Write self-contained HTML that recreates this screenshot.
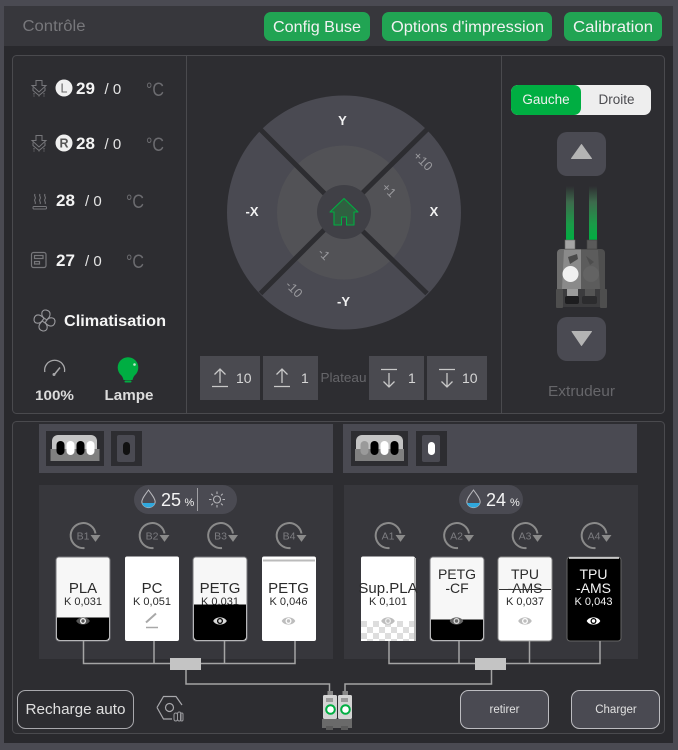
<!DOCTYPE html>
<html><head><meta charset="utf-8"><style>
html,body{margin:0;padding:0;background:#4a4a52}
svg{display:block}
text{font-family:"Liberation Sans",sans-serif}
.c{text-anchor:middle}
</style></head><body>
<svg width="678" height="750" viewBox="0 0 678 750" xmlns="http://www.w3.org/2000/svg">
<defs>
<linearGradient id="tube" x1="0" y1="0" x2="0" y2="1"><stop offset="0" stop-color="#2d2d31"/><stop offset=".3" stop-color="#3d6a4c"/><stop offset=".7" stop-color="#1b9a48"/><stop offset="1" stop-color="#00ae42"/></linearGradient>
<pattern id="chk" width="12" height="12" patternUnits="userSpaceOnUse" x="361" y="621"><rect width="12" height="12" fill="#fff"/><rect width="6" height="6" fill="#ddd"/><rect x="6" y="6" width="6" height="6" fill="#ddd"/></pattern>
<g id="eye"><path d="M-6.800 0C-4.200 -4.800 4.200 -4.800 6.800 0C4.200 4.800 -4.200 4.800 -6.800 0Z" fill="currentColor"/><circle r="3" fill="var(--e,#000)"/><circle r="1.700" fill="currentColor"/></g>
<path id="slot" d="M1 12.500A12.500 12.500 0 1 1 12 -2" fill="none" stroke="#8a8a8a" stroke-width="2"/>
<path id="slotarrow" d="M8 0h8l-4 5.500z" fill="#8a8a8a" stroke="#8a8a8a"/>
</defs>

<rect width="678" height="750" fill="#4a4a52"/>
<rect x="4" y="6" width="669" height="737" fill="#29292d"/>
<rect x="4" y="6" width="669" height="40" fill="#37373c"/>
<text x="22.500" y="31" font-size="15.500" fill="#77777b" textLength="63" lengthAdjust="spacingAndGlyphs">Contrôle</text>

<rect x="264" y="12" width="106" height="29" rx="7" fill="#21a453"/>
<rect x="382" y="12" width="170" height="29" rx="7" fill="#21a453"/>
<rect x="564" y="12" width="98" height="29" rx="7" fill="#21a453"/>
<g fill="#f2f2f2" font-size="16">
<text x="273" y="32" textLength="88" lengthAdjust="spacingAndGlyphs">Config Buse</text>
<text x="391" y="32" textLength="153" lengthAdjust="spacingAndGlyphs">Options d'impression</text>
<text x="573" y="32" textLength="80" lengthAdjust="spacingAndGlyphs">Calibration</text>
</g>

<!-- top panel -->
<rect x="12.500" y="55.500" width="652" height="358" rx="4" fill="#2d2d31" stroke="#4a4a4e"/>
<path d="M186.500 56V413M501.500 56V413" stroke="#4a4a4e"/>

<!-- nozzle icons -->
<g id="nz" fill="none" stroke="#77777b" stroke-width="1">
<path d="M36 80.500h6v5h4l-7 6.500-7-6.500h4z"/><path d="M33 87.500v3l6 5 6-5v-3"/>
<path d="M34 93v1.500M34 95.500v1M39 96.500v.5M44 93v1.500M44 95.500v1"/>
</g>
<use href="#nz" y="55"/>
<circle cx="64" cy="88" r="8.500" fill="#f0f0f0"/><text class="c" x="64" y="92.500" font-size="12.500" fill="#666">L</text>
<circle cx="64" cy="143" r="8.500" fill="#f0f0f0"/><text class="c" x="64" y="147.500" font-size="12.500" font-weight="bold" fill="#555">R</text>
<g fill="#f4f4f4" font-size="17" font-weight="bold">
<text x="76" y="94">29</text><text x="76" y="149">28</text><text x="56" y="206">28</text><text x="56" y="266">27</text>
</g>
<g fill="#e4e4e4" font-size="15">
<text x="104.500" y="94">/ 0</text><text x="104.500" y="149">/ 0</text><text x="85" y="206">/ 0</text><text x="85" y="266">/ 0</text>
</g>
<g fill="#6c6c70" font-size="19">
<text x="146" y="96" textLength="18" lengthAdjust="spacingAndGlyphs">°C</text><text x="146" y="151" textLength="18" lengthAdjust="spacingAndGlyphs">°C</text><text x="126" y="208" textLength="18" lengthAdjust="spacingAndGlyphs">°C</text><text x="126" y="268" textLength="18" lengthAdjust="spacingAndGlyphs">°C</text>
</g>
<!-- bed icon -->
<g fill="none" stroke="#77777b" stroke-width="1">
<path d="M35 194c-1.500 2 1.500 3 0 5s1.500 3 0 5M40 194c-1.500 2 1.500 3 0 5s1.500 3 0 5M45 194c-1.500 2 1.500 3 0 5s1.500 3 0 5"/>
<rect x="33" y="206.500" width="13.500" height="2.500" rx="1"/>
</g>
<!-- chamber icon -->
<g fill="none" stroke="#77777b" stroke-width="1.200">
<rect x="31.500" y="252.500" width="14.500" height="15" rx="2"/>
<rect x="34.500" y="255.500" width="8.500" height="3"/><rect x="34.500" y="261.500" width="5" height="2.500"/>
</g>
<!-- fan -->
<g fill="none" stroke="#9a9a9e" stroke-width="1.100" transform="translate(44.500 320.500) rotate(15)">
<circle r="1.800"/>
<path id="petal" d="M-.5 -2C-5 -3.500 -6.500 -10 -1 -10.500C4 -10.800 5.500 -6 1.800 -1"/>
<path d="M-.5 -2C-5 -3.500 -6.500 -10 -1 -10.500C4 -10.800 5.500 -6 1.800 -1" transform="rotate(90)"/>
<path d="M-.5 -2C-5 -3.500 -6.500 -10 -1 -10.500C4 -10.800 5.500 -6 1.800 -1" transform="rotate(180)"/>
<path d="M-.5 -2C-5 -3.500 -6.500 -10 -1 -10.500C4 -10.800 5.500 -6 1.800 -1" transform="rotate(270)"/>
</g>
<text x="64" y="326" font-size="15.500" font-weight="bold" fill="#f4f4f4" textLength="102" lengthAdjust="spacingAndGlyphs">Climatisation</text>
<!-- gauge -->
<path d="M44.800 372A10 10 0 1 1 64.500 372" fill="none" stroke="#a8a8aa" stroke-width="1.300"/>
<path d="M54 375L60 367.500" stroke="#a8a8aa" stroke-width="1.500"/><circle cx="54" cy="374.500" r="1.500" fill="#a8a8aa"/>
<text class="c" x="54.500" y="400" font-size="14" font-weight="bold" fill="#dcdcdc" textLength="39" lengthAdjust="spacingAndGlyphs">100%</text>
<!-- lamp -->
<circle cx="128" cy="367.500" r="10.300" fill="#00ae42"/>
<path d="M120 373.500C122 376 123 377.500 123.500 380H132.500C133 377.500 134 376 136 373.500z" fill="#00ae42"/>
<rect x="124.500" y="380.500" width="7" height="2" rx="1" fill="#00ae42"/>
<circle cx="134.500" cy="364.500" r="1.300" fill="#bfe9cd"/>
<text class="c" x="129" y="400" font-size="14.500" font-weight="bold" fill="#dcdcdc" textLength="49" lengthAdjust="spacingAndGlyphs">Lampe</text>

<!-- jog wheel -->
<circle cx="344" cy="212.500" r="117" fill="#4a4a52"/>
<circle cx="344" cy="212.500" r="67" fill="#525256"/>
<path d="M260.500 129.500L325 194M427 129.500L362.500 193M260.500 293.500L325 229M427 293.500L362.500 231" stroke="#2d2d31" stroke-width="5"/>
<circle cx="344" cy="212" r="27" fill="#404046"/>
<path d="M344 198.500L330 212h4v13h7.500v-8h5v8h7.500v-13h4z" fill="#2f6040" stroke="#00ae42" stroke-width="1.100" stroke-linejoin="round"/>
<g font-weight="bold" fill="#f2f2f2" font-size="13">
<text class="c" x="342.500" y="125">Y</text>
<text class="c" x="434" y="216">X</text>
<text class="c" x="252" y="216">-X</text>
<text class="c" x="343.500" y="306">-Y</text>
</g>
<g fill="#9a9a9e" font-size="12.500">
<text class="c" transform="translate(420 164) rotate(45)">+10</text>
<text class="c" transform="translate(386 193) rotate(45)">+1</text>
<text class="c" transform="translate(321 257) rotate(45)">-1</text>
<text class="c" transform="translate(291 292) rotate(45)">-10</text>
</g>

<!-- plateau -->
<g fill="#4a4a50">
<rect x="200" y="356" width="60" height="44"/><rect x="263" y="356" width="55" height="44"/>
<rect x="369" y="356" width="55" height="44"/><rect x="427" y="356" width="60" height="44"/>
</g>
<g fill="none" stroke="#c8c8c8" stroke-width="1.300">
<path d="M212 386.500H228M220 383V369M214.500 374.500L220 369L225.500 374.500"/>
<path d="M274 386.500H290M282 383V369M276.500 374.500L282 369L287.500 374.500"/>
<path d="M381 369.500H397M389 373V387M383.500 381.500L389 387L394.500 381.500"/>
<path d="M439 369.500H455M447 373V387M441.500 381.500L447 387L452.500 381.500"/>
</g>
<g fill="#d6d6d6" font-size="14">
<text x="236" y="383">10</text><text x="301" y="383">1</text><text x="408" y="383">1</text><text x="462" y="383">10</text>
</g>
<text x="320.500" y="382" font-size="12.500" fill="#66666a" textLength="46" lengthAdjust="spacingAndGlyphs">Plateau</text>

<!-- extruder -->
<rect x="511" y="85" width="140" height="30" rx="7" fill="#eeeeee"/>
<path d="M518 85h56a7 7 0 0 1 7 7v16a7 7 0 0 1-7 7h-56a7 7 0 0 1-7-7v-16a7 7 0 0 1 7-7z" fill="#00ae42"/>
<text class="c" x="546" y="104" font-size="13.500" fill="#f0f0f0">Gauche</text>
<text class="c" x="616.500" y="104" font-size="13.500" fill="#4c4c50">Droite</text>
<rect x="557" y="132" width="49" height="44" rx="10" fill="#4a4a52"/>
<path d="M581.500 144.500L591.500 158.500H571.500z" fill="#b4b4b4" stroke="#b4b4b4" stroke-linejoin="round"/>
<rect x="557" y="317" width="49" height="44" rx="10" fill="#4a4a52"/>
<path d="M572 331.500H591.500L581.500 345.500z" fill="#b4b4b4" stroke="#b4b4b4" stroke-linejoin="round"/>
<rect x="566" y="186" width="8" height="54" fill="url(#tube)"/>
<rect x="589" y="186" width="8" height="54" fill="url(#tube)"/>
<rect x="565" y="240" width="10" height="9" fill="#a4a4a4" stroke="#666" stroke-width=".6"/>
<rect x="587" y="240" width="10" height="9" fill="#5a5a5a" stroke="#444" stroke-width=".6"/>
<rect x="560" y="289" width="43" height="18" fill="#3c3c3e"/>
<rect x="556" y="289" width="7" height="19" rx="1" fill="#4e4e4e"/>
<rect x="600" y="289" width="7" height="19" rx="1" fill="#4e4e4e"/>
<rect x="567" y="289" width="11" height="7" fill="#9c9c9c"/>
<rect x="585" y="289" width="10" height="7" fill="#555"/>
<rect x="565" y="296" width="14" height="8" rx="2" fill="#1d1d1f"/>
<rect x="582" y="296" width="15" height="8" rx="2" fill="#2c2c2e"/>
<path d="M561 249H581V289H557V253a4 4 0 0 1 4-4z" fill="#6e6e6e"/>
<path d="M564 250H581V289H562z" fill="#8a8a8a"/>
<path d="M581 249H601a4 4 0 0 1 4 4V289H581z" fill="#4f4f4f"/>
<path d="M581 250H598L600 289H581z" fill="#5c5c5c"/>
<path d="M568 257L577 254L578 259L570 264z" fill="#4a4a4a"/>
<path d="M586 256L594 262L590 265z" fill="#4d4d4d"/>
<circle cx="570.500" cy="274" r="8" fill="#f0f0f0"/>
<circle cx="591" cy="274" r="8" fill="#636363"/>
<text class="c" x="581.500" y="396" font-size="14.500" fill="#66666a" textLength="67" lengthAdjust="spacingAndGlyphs">Extrudeur</text>

<!-- bottom panel -->
<rect x="12.500" y="421.500" width="652" height="312" rx="4" fill="#2d2d31" stroke="#4a4a4e"/>
<rect x="39" y="424" width="294" height="49" fill="#4a4a52"/>
<rect x="343" y="424" width="294" height="49" fill="#4a4a52"/>
<rect x="39" y="485" width="294" height="174" fill="#37373c"/>
<rect x="344" y="485" width="294" height="174" fill="#37373c"/>

<!-- ext. spool top icons -->
<rect x="46" y="431" width="58" height="35" fill="#2d2d31"/>
<rect x="111" y="431" width="31" height="35" fill="#2d2d31"/>
<path d="M52 449V441a6 6 0 0 1 6-6H91a6 6 0 0 1 6 6v8z" fill="#c4c4c4"/>
<rect x="50.500" y="449" width="49" height="12" fill="#808080"/>
<rect x="56.500" y="441" width="8" height="14" rx="4" fill="#000"/><rect x="66.500" y="441" width="8" height="14" rx="4" fill="#fff"/>
<rect x="76.500" y="441" width="8" height="14" rx="4" fill="#000"/><rect x="86.500" y="441" width="8" height="14" rx="4" fill="#fff"/>
<rect x="117" y="435" width="18" height="27" rx="2" fill="#4a4a52"/><rect x="123" y="442" width="7" height="13" rx="3.500" fill="#111"/>

<rect x="351" y="431" width="57" height="35" fill="#2d2d31"/>
<rect x="416" y="431" width="31" height="35" fill="#2d2d31"/>
<path d="M356 449V441a6 6 0 0 1 6-6H397a6 6 0 0 1 6 6v8z" fill="#c4c4c4"/>
<rect x="355" y="449" width="49" height="12" fill="#808080"/>
<rect x="360.500" y="441" width="8" height="14" rx="4" fill="#9a9a9a"/><rect x="370.500" y="441" width="8" height="14" rx="4" fill="#000"/>
<rect x="380.500" y="441" width="8" height="14" rx="4" fill="#fff"/><rect x="390.500" y="441" width="8" height="14" rx="4" fill="#000"/>
<rect x="422" y="435" width="18" height="27" rx="2" fill="#4a4a52"/><rect x="428" y="442" width="7" height="13" rx="3.500" fill="#fff"/>

<!-- humidity -->
<rect x="134" y="485" width="103" height="29" rx="14.500" fill="#4a4a52"/>
<rect x="459" y="485" width="64" height="29" rx="14.500" fill="#4a4a52"/>
<g id="drop"><path d="M148.500 490C145 495 141.800 498.500 141.800 502a6.800 6.800 0 0 0 13.400 0C155.200 498.500 152 495 148.500 490z" fill="none" stroke="#b8b8bc" stroke-width="1"/>
<path d="M142.100 503h12.800a6.500 5.500 0 0 1-12.800 0z" fill="#2fa8dd"/></g>
<use href="#drop" x="325"/>
<text x="161" y="506" font-size="18" fill="#f4f4f4">25</text>
<text x="184.500" y="506" font-size="11" fill="#f0f0f0">%</text>
<text x="486" y="506" font-size="18" fill="#f4f4f4">24</text>
<text x="510" y="506" font-size="11" fill="#f0f0f0">%</text>
<path d="M197.500 488V511" stroke="#a0a0a4"/>
<g stroke="#b4b4b8" stroke-width="1.100" fill="none">
<circle cx="217" cy="499.500" r="3.500"/>
<path d="M217 491.500v2.500M217 505v2.500M209 499.500h2.500M222.500 499.500h2.500M211.300 493.800l1.700 1.700M221 503.500l1.700 1.700M222.700 493.800l-1.700 1.700M213 503.500l-1.700 1.700"/>
</g>

<!-- slot indicators -->
<g>
<use href="#slot" x="83.500" y="535.500"/><use href="#slotarrow" x="83.500" y="535.500"/>
<use href="#slot" x="152.500" y="535.500"/><use href="#slotarrow" x="152.500" y="535.500"/>
<use href="#slot" x="221" y="535.500"/><use href="#slotarrow" x="221" y="535.500"/>
<use href="#slot" x="289.500" y="535.500"/><use href="#slotarrow" x="289.500" y="535.500"/>
<use href="#slot" x="388.500" y="535.500"/><use href="#slotarrow" x="388.500" y="535.500"/>
<use href="#slot" x="457" y="535.500"/><use href="#slotarrow" x="457" y="535.500"/>
<use href="#slot" x="525.500" y="535.500"/><use href="#slotarrow" x="525.500" y="535.500"/>
<use href="#slot" x="594.500" y="535.500"/><use href="#slotarrow" x="594.500" y="535.500"/>
</g>
<g font-size="10.500" fill="#7c7c80">
<text class="c" x="83" y="539.500">B1</text><text class="c" x="152" y="539.500">B2</text><text class="c" x="220.500" y="539.500">B3</text><text class="c" x="289" y="539.500">B4</text>
<text class="c" x="388" y="539.500">A1</text><text class="c" x="456.500" y="539.500">A2</text><text class="c" x="525" y="539.500">A3</text><text class="c" x="594" y="539.500">A4</text>
</g>

<!-- cards -->
<rect x="56" y="557" width="54" height="84" rx="3" fill="#f7f7f7" stroke="#77777b"/>
<path d="M57 617.500H109V637a3 3 0 0 1-3 3H60a3 3 0 0 1-3-3z" fill="#000"/>
<text class="c" x="83" y="593" font-size="15" fill="#2b2b2b">PLA</text>
<text class="c" x="83" y="605" font-size="11" fill="#2b2b2b">K 0,031</text>
<use href="#eye" x="83" y="621" color="#555" style="--e:#f7f7f7"/>

<rect x="125" y="556.500" width="54" height="84.500" rx="2" fill="#fff"/>
<text class="c" x="152" y="593" font-size="15" fill="#2b2b2b">PC</text>
<text class="c" x="152" y="605" font-size="11" fill="#2b2b2b">K 0,051</text>
<path d="M146 622.500L156 613.500" stroke="#a8a8a8" stroke-width="2"/><path d="M146 627.500H158" stroke="#a8a8a8" stroke-width="1.500"/>

<rect x="193" y="557" width="54" height="84" rx="3" fill="#f7f7f7" stroke="#77777b"/>
<text class="c" x="220" y="593" font-size="15" fill="#2b2b2b">PETG</text>
<text class="c" x="220" y="605" font-size="11" fill="#2b2b2b">K 0,031</text>
<path d="M194 604.500H246V637a3 3 0 0 1-3 3H197a3 3 0 0 1-3-3z" fill="#000"/>
<use href="#eye" x="220" y="621" color="#d8d8d8" style="--e:#000"/>

<rect x="262" y="556.500" width="54" height="84.500" rx="2" fill="#fff"/>
<rect x="263" y="559.500" width="52" height="2" fill="#bbb"/>
<text class="c" x="288.500" y="593" font-size="15" fill="#2b2b2b">PETG</text>
<text class="c" x="288.500" y="605" font-size="11" fill="#2b2b2b">K 0,046</text>
<use href="#eye" x="288.500" y="621" color="#bdbdbd" style="--e:#fff"/>

<rect x="361" y="556.500" width="54" height="84.500" rx="2" fill="#fff"/>
<rect x="361" y="621" width="54" height="20" fill="url(#chk)"/>
<rect x="414" y="558" width="2" height="83" fill="#bbb"/>
<text class="c" x="388" y="593" font-size="15" fill="#2b2b2b">Sup.PLA</text>
<text class="c" x="388" y="605" font-size="11" fill="#2b2b2b">K 0,101</text>
<use href="#eye" x="388" y="621" color="#bdbdbd" style="--e:#eee"/>

<rect x="430" y="557" width="54" height="84" rx="3" fill="#f7f7f7" stroke="#77777b"/>
<path d="M431 619.500H483V637a3 3 0 0 1-3 3H434a3 3 0 0 1-3-3z" fill="#000"/>
<text class="c" x="457" y="579" font-size="14" fill="#2b2b2b">PETG</text>
<text class="c" x="457" y="593" font-size="14" fill="#2b2b2b">-CF</text>
<use href="#eye" x="456.500" y="621" color="#666" style="--e:#ddd"/>

<rect x="498" y="557" width="54" height="84" rx="3" fill="#fff" stroke="#888"/>
<rect x="499" y="558" width="52" height="31" fill="#f7f7f7"/>
<text class="c" x="525" y="579" font-size="14" fill="#2b2b2b">TPU</text>
<text class="c" x="525" y="593" font-size="14" fill="#2b2b2b">-AMS</text>
<path d="M499 589.500H551" stroke="#333"/>
<text class="c" x="525" y="605" font-size="11" fill="#2b2b2b">K 0,037</text>
<use href="#eye" x="525" y="621" color="#bdbdbd" style="--e:#fff"/>

<rect x="567" y="557" width="54" height="84" rx="3" fill="#000" stroke="#666"/>
<path d="M569 558H619" stroke="#e8e8e8" stroke-width="1.500"/>
<text class="c" x="593.500" y="579" font-size="14" fill="#f4f4f4">TPU</text>
<text class="c" x="593.500" y="593" font-size="14" fill="#f4f4f4">-AMS</text>
<text class="c" x="593.500" y="605" font-size="11" fill="#f4f4f4">K 0,043</text>
<use href="#eye" x="593.500" y="621" color="#fff" style="--e:#000"/>

<!-- pipes -->
<g fill="none" stroke="#a4a4a4" stroke-width="1.500">
<path d="M83.500 641V663.500H295V641M154 641V663M224.500 641V663"/>
<path d="M389 641V663.500H600V641M459 641V663M529.500 641V663"/>
<path d="M186 670V684H329.500V692"/>
<path d="M491.500 670V684H345V692"/>
</g>
<rect x="170" y="658" width="31" height="12" fill="#c4c4c4"/>
<rect x="475" y="658" width="31" height="12" fill="#c4c4c4"/>

<!-- small extruders -->
<g id="se">
<rect x="327.500" y="691" width="5.500" height="5" fill="#8a8a8a"/>
<rect x="323" y="695" width="14" height="24" rx="1.500" fill="#d4d4d4"/>
<rect x="326" y="698" width="7" height="4" fill="#9a9a9a"/>
<rect x="322" y="719" width="15" height="9" fill="#6a6a6a"/>
<rect x="326" y="726" width="7" height="4" fill="#5a5a5a"/>
<circle cx="330.500" cy="709.500" r="4.300" fill="#fff" stroke="#00ae42" stroke-width="2"/>
</g>
<use href="#se" x="15"/>

<!-- bottom controls -->
<rect x="17.500" y="690.500" width="116" height="38" rx="8" fill="#2d2d31" stroke="#a8a8ac"/>
<text class="c" x="75.500" y="714" font-size="15" fill="#e0e0e0" textLength="100" lengthAdjust="spacingAndGlyphs">Recharge auto</text>
<g fill="none" stroke="#a8a8ac" stroke-width="1.200">
<path d="M157 707.500L163.500 696.500H176L182 705M172 719H163.500L157 707.500"/>
<circle cx="169.500" cy="707.500" r="4"/>
</g>
<g fill="none" stroke="#9a9a9e" stroke-width="1">
<rect x="174" y="713" width="3.500" height="8" rx="1.700"/><rect x="177.500" y="712" width="3.500" height="9" rx="1.700"/><rect x="180.500" y="713" width="2.500" height="8" rx="1.200"/>
</g>
<rect x="460.500" y="690.500" width="88" height="38" rx="8" fill="#4a4a52" stroke="#bcbcc0"/>
<rect x="571.500" y="690.500" width="88" height="38" rx="8" fill="#4a4a52" stroke="#bcbcc0"/>
<text class="c" x="504.500" y="713" font-size="11.500" fill="#e0e0e0">retirer</text>
<text class="c" x="616" y="713" font-size="11.500" fill="#e0e0e0">Charger</text>
</svg>
</body></html>
